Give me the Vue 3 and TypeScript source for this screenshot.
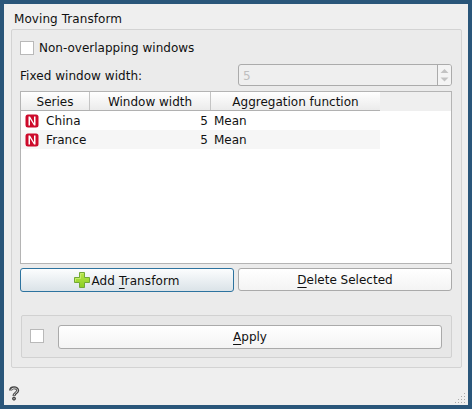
<script setup lang="ts">
import { ref } from 'vue'

interface Series {
  name: string
  width: number
  fn: string
}

const rows = ref<Series[]>([
  { name: 'China', width: 5, fn: 'Mean' },
  { name: 'France', width: 5, fn: 'Mean' },
])
const columns = ['Series', 'Window width', 'Aggregation function']
const gripDots = [
  [9, 0], [6, 3], [9, 3], [3, 6], [6, 6], [9, 6], [0, 9], [3, 9], [6, 9], [9, 9],
]
</script>

<template>
  <main class="window">
    <div class="title">Moving Transform</div>
    <section class="group">
      <label class="check-row"><span class="box"></span>Non-overlapping windows</label>
      <div class="spin-row">
        <span class="label">Fixed window width:</span>
        <div class="spin">
          <span class="value">5</span>
          <span class="arrows">
            <svg width="14" height="20" viewBox="0 0 14 20">
              <path d="M2.5 8 L6.5 4 L10.5 8Z M2.5 12.5 L6.5 16.5 L10.5 12.5Z" fill="#c3c3c3" />
            </svg>
          </span>
        </div>
      </div>
      <div class="table">
        <div class="band">
          <div class="line head">
            <span v-for="c in columns" :key="c">{{ c }}</span>
          </div>
        </div>
        <div v-for="r in rows" :key="r.name" class="line row">
          <span class="name">
            <svg width="14" height="14" viewBox="0 0 14 14">
              <rect x="0.5" y="0.5" width="13" height="13" rx="2.5" fill="#cd0a2b" />
              <path d="M3.5 11.5V2.5H5L9 9.2V2.5H10.5V11.5H9L5 4.9V11.5Z" fill="#fff" />
            </svg>
            <span class="series">{{ r.name }}</span>
          </span>
          <span class="num">{{ r.width }}</span>
          <span class="fn">{{ r.fn }}</span>
        </div>
      </div>
      <div class="buttons">
        <button class="btn focus">
          <svg width="17" height="17" viewBox="0 0 17 17">
            <defs>
              <linearGradient id="plus" x1="0" y1="0" x2="0" y2="1">
                <stop offset="0" stop-color="#b9e64a" />
                <stop offset="1" stop-color="#8bcf22" />
              </linearGradient>
            </defs>
            <path d="M5.5 .5h5v5h5v5h-5v5h-5v-5h-5v-5h5z" fill="url(#plus)" stroke="#72a836" stroke-linejoin="round" />
            <path d="M6.5 6.5V1.5h3M1.5 9.5v-3h5" fill="none" stroke="#cdf07a" stroke-width=".8" />
          </svg>
          <span>Add <i>T</i>ransform</span>
        </button>
        <button class="btn"><span><i>D</i>elete Selected</span></button>
      </div>
      <div class="apply">
        <span class="box"></span>
        <button class="btn"><span><i>A</i>pply</span></button>
      </div>
    </section>
    <footer>
      <svg class="help" width="11" height="15" viewBox="0 0 11 15">
        <path d="M1.6 4.6C1.6 .9 8.7 .8 8.7 4.5C8.7 7 5 6.8 5 10" fill="none" stroke="#444" stroke-width="3" />
        <path d="M1.8 4.3C2.2 1.5 8.5 1.2 8.5 4.5C8.5 7 5 6.8 5 9.6" fill="none" stroke="#ddd" stroke-width="1" />
        <circle cx="5" cy="12.6" r="1.5" fill="#888" stroke="#333" />
      </svg>
      <svg class="grip" width="11" height="11" viewBox="0 0 11 11">
        <rect v-for="(d, i) in gripDots" :key="i" :x="d[0]" :y="d[1]" width="1" height="1" fill="#aaa" />
      </svg>
    </footer>
  </main>
</template>

<style>
body {
  margin: 0;
}
</style>

<style scoped>
* {
  box-sizing: border-box;
}
.window {
  width: 472px;
  height: 409px;
  border: 4px solid #2a567a;
  background: #efefef;
  color: #111;
  font: 12px/16px "DejaVu Sans", sans-serif;
  padding: 7px 6px 0 7px;
  display: flex;
  flex-direction: column;
}
.title {
  height: 18px;
  padding-left: 3px;
  letter-spacing: 0.07px;
}
.group {
  height: 339px;
  border: 1px solid #d3d3d3;
  border-radius: 2px;
  background: #ebebeb;
  padding: 10px 9px 9px 8px;
  display: flex;
  flex-direction: column;
}
.check-row {
  display: flex;
  align-items: center;
  gap: 5px;
  height: 16px;
}
.box {
  width: 14px;
  height: 14px;
  flex: none;
  border: 1px solid #b9b9b9;
  background: #fff;
}
.spin-row {
  display: flex;
  justify-content: space-between;
  align-items: center;
  height: 22px;
  margin-top: 8px;
}
.label {
  padding-top: 2px;
  letter-spacing: 0.04px;
}
.spin {
  width: 214px;
  height: 22px;
  border: 1px solid #ababab;
  border-radius: 3px;
  background: #efefef;
  display: flex;
  align-items: center;
  justify-content: space-between;
  color: #bebebe;
  padding-left: 4px;
}
.value {
  padding-top: 2px;
}
.arrows {
  height: 20px;
  width: 14px;
  border-left: 1px solid #ababab;
  background: #f4f4f4;
  border-radius: 0 2px 2px 0;
}
.arrows svg {
  display: block;
}
.table {
  margin-top: 5px;
  height: 173px;
  border: 1px solid #b4b4b4;
  background: #fff;
}
.band {
  background: #efefef;
}
.line {
  display: grid;
  grid-template-columns: 69px 121px 169px;
  width: 359px;
  height: 19px;
}
.head {
  background: linear-gradient(#fff, #ebebeb);
  border-bottom: 1px solid #b1b1b1;
  text-align: center;
  line-height: 20px;
}
.head span {
  height: 18px;
}
.head span:not(:last-child) {
  border-right: 1px solid #c4c4c4;
}
.row {
  align-items: center;
}
.row:nth-child(odd) {
  background: #f6f6f6;
}
.name {
  display: flex;
  align-items: center;
  gap: 7px;
  padding-left: 4px;
}
.series {
  letter-spacing: 0.1px;
}
.num {
  text-align: right;
  padding-right: 3px;
}
.fn {
  padding-left: 3px;
}
.buttons {
  display: flex;
  align-items: flex-start;
  gap: 4px;
  margin-top: 4px;
}
.btn {
  flex: 1;
  height: 23px;
  border: 1px solid #aaa;
  border-radius: 3px;
  background: linear-gradient(#fff, #f4f4f4);
  color: inherit;
  font: inherit;
  padding: 0;
  display: flex;
  align-items: center;
  justify-content: center;
}
.btn i {
  font-style: normal;
  text-decoration: underline;
  text-decoration-thickness: 1px;
  text-underline-offset: 3px;
}
.focus {
  height: 24px;
  border-color: #2d739f;
  background: linear-gradient(#fcfdfe, #dbe3e8);
  letter-spacing: 0.1px;
}
.focus span {
  padding-top: 1px;
}
.apply {
  margin: 23px 0 0 1px;
  height: 43px;
  border: 1px solid #d1d1d1;
  border-radius: 2px;
  background: #e7e7e7;
  display: flex;
  align-items: center;
  gap: 14px;
  padding: 0 9px 0 8px;
}
.apply .box {
  margin-bottom: 2px;
}
.apply .btn {
  height: 24px;
}
footer {
  flex: 1;
  display: flex;
  justify-content: space-between;
  align-items: flex-end;
  margin: 0 -4px 0 -2px;
}
.help {
  margin-bottom: 4px;
}
.grip {
  margin-bottom: 1px;
}
</style>
